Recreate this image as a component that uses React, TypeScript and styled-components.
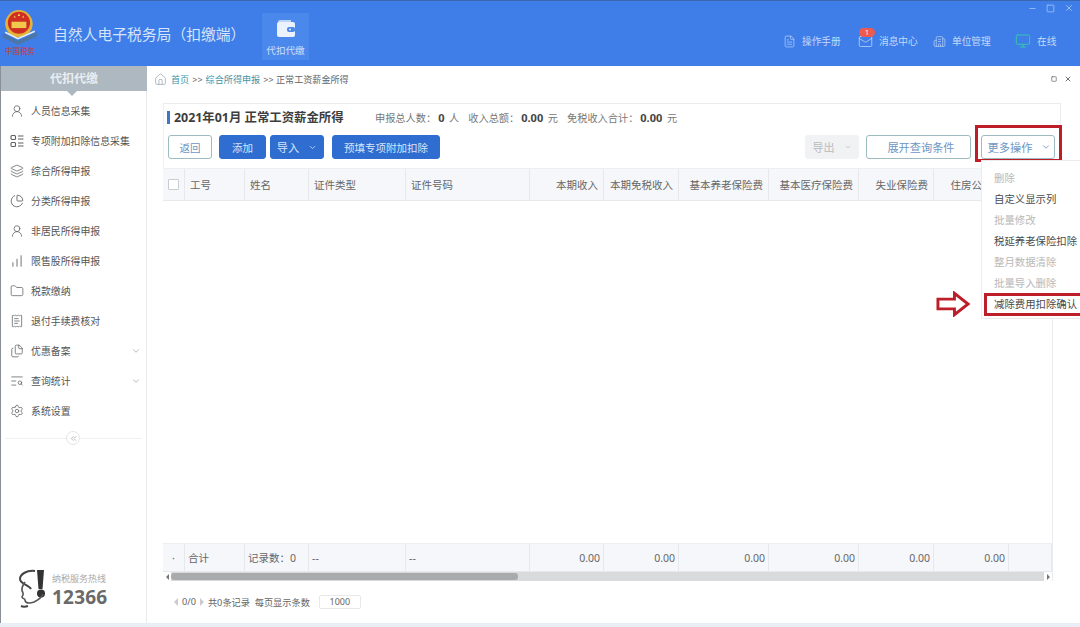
import React from "react";
import styled, { createGlobalStyle } from "styled-components";
import { ChevronDown, ChevronsLeft, Home, Settings, Layers, Folder, UserRound, ChartNoAxesColumnIncreasing, Files, TextSearch, ReceiptText, ChartPie, FileText, Mail, Building2, Monitor, Minus, X, Square } from "lucide-react";

const Global = createGlobalStyle`
  html, body { margin: 0; padding: 0; width: 1080px; height: 627px; overflow: hidden; background: #fff; }
  * { box-sizing: border-box; }
  body { font-family: "Noto Sans", "Noto Sans CJK SC", "Liberation Sans", sans-serif; color: #555; }
`;

const Page = styled.div`
  width: 1080px; height: 627px; display: flex; flex-direction: column; overflow: hidden; background: #fff;
  border-bottom: 4px solid #e9eef5;
`;
const Header = styled.header`
  height: 66px; flex: none; display: flex; background: #3f7ee8; border-top: 1px solid #3a68b0;
`;
const LogoBox = styled.div`
  width: 53px; flex: none; padding: 7px 0 0 2px; display: flex; flex-direction: column;
`;
const LogoText = styled.span`
  font-size: 7.5px; line-height: 9px; color: #d0342c; width: 36px; text-align: center; white-space: nowrap; margin-top: 1px;
`;
const Title = styled.h1`
  margin: 0; width: 209px; font-size: 14.8px; font-weight: 400; color: #d5e4fb; line-height: 66px; white-space: nowrap; height: 66px;
`;
const ModuleTab = styled.div`
  width: 47px; height: 47px; margin-top: 12px; background: #4b88ec; display: flex; flex-direction: column; align-items: center;
  padding-top: 6px; font-size: 9.6px; color: #cfe0fa; white-space: nowrap; line-height: 13px; gap: 6px;
`;
const HeaderRight = styled.div`
  margin-left: auto; display: flex; flex-direction: column; align-items: flex-end;
`;
const WinControls = styled.div`
  display: flex; align-items: center; gap: 9px; height: 14px; padding-right: 6px; color: #a9c8f5;
`;
const NavBar = styled.nav`
  display: flex; align-items: center; height: 20px; margin-top: 16px; padding-right: 23px;
`;
const NavItem = styled.div<{ $w: number }>`
  width: ${p => p.$w}px; display: flex; align-items: center; gap: 6px; font-size: 9.7px; color: #c4d9f8; white-space: nowrap; position: relative;
`;
const Badge = styled.span`
  position: absolute; left: 1px; top: -6px; width: 16px; height: 9px; border-radius: 5px; background: #ee5a50; color: #fff;
  font-size: 7px; line-height: 9px; text-align: center;
`;

const Body = styled.div`
  flex: 1; min-height: 0; display: flex;
`;
const Sidebar = styled.aside`
  width: 147px; flex: none; display: flex; flex-direction: column; border-left: 1px solid #8a8f96; border-right: 1px solid #e8eaee; position: relative;
`;
const SideHead = styled.div`
  height: 25px; flex: none; background: #adb8c0; color: #e9edf0; font-size: 12px; font-weight: 700; text-align: center; line-height: 25px; position: relative; margin-right: -1px;
  &::after {
    content: ""; position: absolute; left: 66px; top: 25px; border: 5px solid transparent; border-top-color: #adb8c0; border-bottom: 0;
  }
`;
const Menu = styled.ul`
  list-style: none; margin: 0; padding: 5px 0 0; display: flex; flex-direction: column;
`;
const MenuItem = styled.li`
  height: 30px; display: flex; align-items: center; padding-left: 9px; gap: 7px; font-size: 9.9px; color: #555; white-space: nowrap;
  svg { flex: none; color: #5d5f63; }
  svg.caret { margin-left: auto; margin-right: 5px; color: #a8adb3; }
`;
const Collapse = styled.div`
  margin: 12px 4px 0; height: 1px; background: #eef0f2; position: relative;
`;
const CollapseBtn = styled.span`
  position: absolute; left: 61px; top: -7px; width: 14px; height: 14px; border-radius: 50%; border: 1px solid #e3e5e8; background: #fff; display: flex; align-items: center; justify-content: center; color: #a0a4a9;
`;
const Hotline = styled.div`
  margin-top: auto; margin-bottom: 13px; padding-left: 17px; display: flex; gap: 2px; align-items: flex-start;
`;
const HotText = styled.div`
  display: flex; flex-direction: column; padding-top: 4px;
`;
const HotLabel = styled.span`
  font-size: 9px; color: #aaa; line-height: 12px; white-space: nowrap;
`;
const HotNum = styled.span`
  font-size: 19px; font-weight: 700; color: #6a6a6a; line-height: 24px; letter-spacing: 0.2px;
`;

const Main = styled.main`
  flex: 1; min-width: 0; display: flex; flex-direction: column;
`;
const Crumbs = styled.div`
  height: 29px; flex: none; display: flex; align-items: center; padding: 0 8px 3px 7px; font-size: 9.1px; color: #666; gap: 3px; white-space: nowrap;
  svg.home { color: #8d9aa6; margin-right: 1px; }
`;
const CrumbLink = styled.span`
  color: #3d93a8;
`;
const CrumbTools = styled.div`
  margin-left: auto; display: flex; align-items: center; gap: 7px; color: #555;
`;
const Panel = styled.section`
  margin: 8px 0 0 16px; width: 898px; display: flex; flex-direction: column; border-top: 1px solid #ececec;
`;
const TitleRow = styled.div`
  height: 27px; display: flex; align-items: center; padding-left: 3px; border-left: 1px solid #efefef; border-right: 1px solid #ececec; white-space: nowrap;
`;
const Heading = styled.h2`
  margin: 0; font-size: 12.4px; font-weight: 700; color: #3d3d3d; border-left: 3px solid #3b78c8; padding-left: 4px; line-height: 13px; width: 208px;
`;
const Stat = styled.span`
  font-size: 10.2px; color: #777; margin-right: 9px;
  b { font-size: 11px; color: #444; font-weight: 700; margin: 0 2px; }
`;
const Toolbar = styled.div`
  height: 37px; display: flex; padding: 4px 0 0 4px; border-left: 1px solid #efefef; border-right: 1px solid #ececec;
`;
const Btn = styled.button<{ $kind: "primary" | "outline" | "disabled"; $w: number; $mr?: number; $size?: number; $pl?: number }>`
  width: ${p => p.$w}px; height: 24px; flex: none; margin-right: ${p => p.$mr ?? 4}px; padding: 0 0 0 ${p => p.$pl ?? 0}px; border-radius: 3px; font: inherit; font-size: ${p => p.$size ?? 10.5}px; white-space: nowrap;
  display: inline-flex; align-items: center; justify-content: center; gap: 9px;
  background: ${p => (p.$kind === "primary" ? "#2f6ed0" : p.$kind === "disabled" ? "#f1f2f3" : "#fff")};
  color: ${p => (p.$kind === "primary" ? "#d6e5fa" : p.$kind === "disabled" ? "#b9bcbf" : "#6d96c4")};
  border: 1px solid ${p => (p.$kind === "primary" ? "#2f6ed0" : p.$kind === "disabled" ? "#f1f2f3" : "#9dbcc2")};
`;
const ToolSpacer = styled.span`
  margin-left: auto;
`;
const MoreWrap = styled.div`
  position: relative; flex: none; height: 24px;
`;
const RedBox = styled.span`
  position: absolute; left: -6px; top: -10px; width: 87px; height: 37px; border: 3px solid #bd1e2a; pointer-events: none;
`;
const Dropdown = styled.ul`
  position: absolute; left: 0; top: 25px; width: 100px; height: 159px; margin: 0; padding: 7px 0 0; list-style: none; background: #fff; border: 1px solid #ececec; border-right: 0; z-index: 3; text-align: left;
`;
const DropItem = styled.li<{ $off?: boolean }>`
  height: 21px; line-height: 21px; padding-left: 12px; font-size: 10.4px; white-space: nowrap; position: relative; color: ${p => (p.$off ? "#b8b8b8" : "#4a4a4a")};
`;
const RedItem = styled.span`
  position: absolute; left: 2px; top: -1px; width: 100px; height: 23px; border: 3px solid #bd1e2a;
`;
const RedArrow = styled.svg`
  position: absolute; left: -46px; top: -3px;
`;

const Table = styled.div`
  width: 890px; flex: none; display: flex; flex-direction: column; border-right: 1px solid #e9ebee;
`;
const Row = styled.div<{ $h: number }>`
  height: ${p => p.$h}px; display: grid; grid-template-columns: 22px 60px 64px 97px 124px 74px 75px 90px 90px 75px 75px 43px; flex: none; background: #f6f7fa; border-top: 1px solid #eceef1; border-bottom: 1px solid #e6e8ec;
`;
const Cell = styled.div<{ $right?: boolean; $foot?: boolean }>`
  border-right: 1px solid #e6e8ec; display: flex; align-items: center; overflow: hidden; white-space: nowrap; font-size: 10.5px; color: #666;
  justify-content: ${p => (p.$right ? "flex-end" : "flex-start")};
  padding: ${p => (p.$foot ? (p.$right ? "0 3px 0 0" : "0 3px") : "0 5px")};
`;
const CheckCell = styled(Cell)`
  justify-content: center; padding: 0;
`;
const Check = styled.span`
  width: 11px; height: 11px; border: 1px solid #c9ccd0; background: #fff; border-radius: 1px;
`;
const TableBody = styled.div`
  height: 342px; flex: none; background: #fff;
`;
const Scroll = styled.div`
  height: 9px; display: flex; align-items: center; background: #d9dadb; position: relative;
`;
const ScrollEnd = styled.span<{ $dir: "l" | "r" }>`
  width: 8px; height: 9px; background: #fff; flex: none; display: flex; align-items: center; justify-content: center;
  &::before {
    content: ""; border: 3px solid transparent; ${p => (p.$dir === "l" ? "border-right-color:#777;border-left:0;" : "border-left-color:#777;border-right:0;")}
  }
`;
const Thumb = styled.span`
  width: 347px; height: 7px; background: #a9aaab; border-radius: 3px;
`;
const Track = styled.span`
  flex: 1;
`;
const Pager = styled.div`
  display: flex; align-items: center; gap: 4px; margin: 13px 0 0 11px; height: 15px; font-size: 9.2px; color: #666; white-space: nowrap;
`;
const PagerArrow = styled.span<{ $dir: "l" | "r" }>`
  border: 4px solid transparent; ${p => (p.$dir === "l" ? "border-right-color:#c9cbce;border-left:0;" : "border-left-color:#c9cbce;border-right:0;")}
`;
const PageSize = styled.span`
  width: 42px; height: 14px; border: 1px solid #e8e8e8; border-radius: 2px; text-align: center; line-height: 12px; margin-left: 5px; font-size: 9px; color: #666;
`;

const Emblem = () => (
  <svg width="36" height="38" viewBox="0 0 34 36">
    <circle cx="16" cy="15" r="13" fill="#e3b33a" />
    <circle cx="16" cy="14" r="10.500" fill="#cf2f22" />
    <rect x="9" y="13" width="14" height="6" fill="#f0c84c" />
    <path d="M12 7l1 2h-2zM16 5l1.200 2.500h-2.400zM20 7l1 2h-2z" fill="#f4d35e" />
    <path d="M1 24 L15 31 L33 23 L33 27 L15 35 L1 28Z" fill="#4d76a8" />
    <path d="M3 23 L15 29 L31 22" stroke="#e7eef7" strokeWidth="1.500" fill="none" />
  </svg>
);
const Wallet = () => (
  <svg width="20" height="19" viewBox="0 0 20 19">
    <path d="M2 3a2 2 0 0 1 2-2h11v3H2z" fill="#bcd4f8" />
    <rect x="1" y="3" width="18" height="15" rx="2" fill="#eaf2fe" />
    <rect x="11" y="8" width="8" height="5" rx="2" fill="#4b88ec" />
    <circle cx="14" cy="10.500" r="1" fill="#eaf2fe" />
  </svg>
);
const ListIcon = () => (
  <svg width="14" height="14" viewBox="0 0 14 14" fill="none" stroke="currentColor" strokeWidth="1.100">
    <rect x="1" y="1.500" width="4.500" height="4" rx="1" />
    <rect x="1" y="8.500" width="4.500" height="4" rx="1" />
    <path d="M8 2h5.500M8 5h5.500M8 9h5.500M8 12h5.500" />
  </svg>
);
const Headset = () => (
  <svg width="32" height="41" viewBox="0 0 32 41">
    <path d="M19 1h7l-1.500 19h-4z" fill="#333" />
    <circle cx="23" cy="24.500" r="4" fill="#333" />
    <path d="M17 2C9 1 2 5 2 10c0 5 9 6 11 10" fill="none" stroke="#444" strokeWidth="2" />
    <path d="M7 13c-3 4-4 8-2 11 1 2-1 3-1 4 0 2 3 1 3 3 0 3 4 4 9 2 4-2 8-5 9-8" fill="none" stroke="#555" strokeWidth="1.600" />
    <path d="M3 37c2 1 4 1 7 0" stroke="#444" strokeWidth="2" fill="none" />
  </svg>
);

const menu: { label: string; icon: React.ReactNode; caret?: boolean }[] = [
  { label: "人员信息采集", icon: <UserRound size={14} strokeWidth={1.3} /> },
  { label: "专项附加扣除信息采集", icon: <ListIcon /> },
  { label: "综合所得申报", icon: <Layers size={14} strokeWidth={1.3} /> },
  { label: "分类所得申报", icon: <ChartPie size={14} strokeWidth={1.5} /> },
  { label: "非居民所得申报", icon: <UserRound size={14} strokeWidth={1.3} /> },
  { label: "限售股所得申报", icon: <ChartNoAxesColumnIncreasing size={14} strokeWidth={1.5} /> },
  { label: "税款缴纳", icon: <Folder size={14} strokeWidth={1.3} /> },
  { label: "退付手续费核对", icon: <ReceiptText size={14} strokeWidth={1.3} /> },
  { label: "优惠备案", icon: <Files size={14} strokeWidth={1.3} />, caret: true },
  { label: "查询统计", icon: <TextSearch size={14} strokeWidth={1.3} />, caret: true },
  { label: "系统设置", icon: <Settings size={14} strokeWidth={1.3} /> },
];

const heads: [string, boolean][] = [
  ["工号", false], ["姓名", false], ["证件类型", false], ["证件号码", false], ["本期收入", true], ["本期免税收入", true],
  ["基本养老保险费", true], ["基本医疗保险费", true], ["失业保险费", true], ["住房公积金", true], ["", true],
];
const foots: [string, boolean][] = [
  ["合计", false], ["记录数：0", false], ["--", false], ["--", false], ["0.00", true], ["0.00", true],
  ["0.00", true], ["0.00", true], ["0.00", true], ["0.00", true], ["", true],
];
const drops: [string, boolean][] = [
  ["删除", true], ["自定义显示列", false], ["批量修改", true], ["税延养老保险扣除", false], ["整月数据清除", true], ["批量导入删除", true],
];

export default function App() {
  return (
    <Page>
      <Global />
      <Header>
        <LogoBox>
          <Emblem />
          <LogoText>中国税务</LogoText>
        </LogoBox>
        <Title>自然人电子税务局（扣缴端）</Title>
        <ModuleTab><Wallet />代扣代缴</ModuleTab>
        <HeaderRight>
          <WinControls>
            <Minus size={9} />
            <Square size={9} />
            <X size={10} />
          </WinControls>
          <NavBar>
            <NavItem $w={75}><FileText size={13} strokeWidth={1.2} />操作手册</NavItem>
            <NavItem $w={75}><Mail size={15} strokeWidth={1.2} /><Badge>1</Badge>消息中心</NavItem>
            <NavItem $w={82}><Building2 size={13} strokeWidth={1.2} />单位管理</NavItem>
            <NavItem $w={42}><Monitor size={16} strokeWidth={1.3} color="#35d0a8" />在线</NavItem>
          </NavBar>
        </HeaderRight>
      </Header>
      <Body>
        <Sidebar>
          <SideHead>代扣代缴</SideHead>
          <Menu>
            {menu.map(m => (
              <MenuItem key={m.label}>
                {m.icon}
                {m.label}
                {m.caret && <ChevronDown className="caret" size={10} />}
              </MenuItem>
            ))}
          </Menu>
          <Collapse><CollapseBtn><ChevronsLeft size={9} /></CollapseBtn></Collapse>
          <Hotline>
            <Headset />
            <HotText>
              <HotLabel>纳税服务热线</HotLabel>
              <HotNum>12366</HotNum>
            </HotText>
          </Hotline>
        </Sidebar>
        <Main>
          <Crumbs>
            <Home className="home" size={13} strokeWidth={1.2} />
            <CrumbLink>首页</CrumbLink> &gt;&gt; <CrumbLink>综合所得申报</CrumbLink> &gt;&gt; 正常工资薪金所得
            <CrumbTools><Square size={6} strokeWidth={2.5} /><X size={8} strokeWidth={2.5} /></CrumbTools>
          </Crumbs>
          <Panel>
            <TitleRow>
              <Heading>2021年01月 正常工资薪金所得</Heading>
              <Stat>申报总人数：<b>0</b> 人</Stat>
              <Stat>收入总额：<b>0.00</b> 元</Stat>
              <Stat>免税收入合计：<b>0.00</b> 元</Stat>
            </TitleRow>
            <Toolbar>
              <Btn $kind="outline" $w={44} $mr={7}>返回</Btn>
              <Btn $kind="primary" $w={47}>添加</Btn>
              <Btn $kind="primary" $w={54} $mr={8} $size={11.2}>导入<ChevronDown size={9} /></Btn>
              <Btn $kind="primary" $w={108}>预填专项附加扣除</Btn>
              <ToolSpacer />
              <Btn $kind="disabled" $w={54} $mr={7} $size={11}>导出<ChevronDown size={8} /></Btn>
              <Btn $kind="outline" $w={105} $mr={10} $size={11.2} $pl={5}>展开查询条件</Btn>
              <MoreWrap>
                <Btn $kind="outline" $w={74} $mr={5} $size={11.2} $pl={3}>更多操作<ChevronDown size={10} /></Btn>
                <RedBox />
                <Dropdown>
                  {drops.map(([t, off]) => <DropItem key={t} $off={off}>{t}</DropItem>)}
                  <DropItem>
                    减除费用扣除确认
                    <RedItem />
                    <RedArrow width="35" height="26" viewBox="0 0 36 26">
                      <path d="M2 8h17V2l14 11-14 11v-6H2z" fill="#fff" stroke="#bd1e2a" strokeWidth="3" />
                    </RedArrow>
                  </DropItem>
                </Dropdown>
              </MoreWrap>
            </Toolbar>
            <Table>
              <Row $h={33}>
                <CheckCell><Check /></CheckCell>
                {heads.map(([t, r], i) => <Cell key={i} $right={r}>{t}</Cell>)}
              </Row>
              <TableBody />
              <Row $h={29}>
                <CheckCell>·</CheckCell>
                {foots.map(([t, r], i) => <Cell key={i} $right={r} $foot>{t}</Cell>)}
              </Row>
              <Scroll>
                <ScrollEnd $dir="l" />
                <Thumb />
                <Track />
                <ScrollEnd $dir="r" />
              </Scroll>
            </Table>
            <Pager>
              <PagerArrow $dir="l" />0/0<PagerArrow $dir="r" />共0条记录&nbsp;&nbsp;每页显示条数
              <PageSize>1000</PageSize>
            </Pager>
          </Panel>
        </Main>
      </Body>
    </Page>
  );
}
